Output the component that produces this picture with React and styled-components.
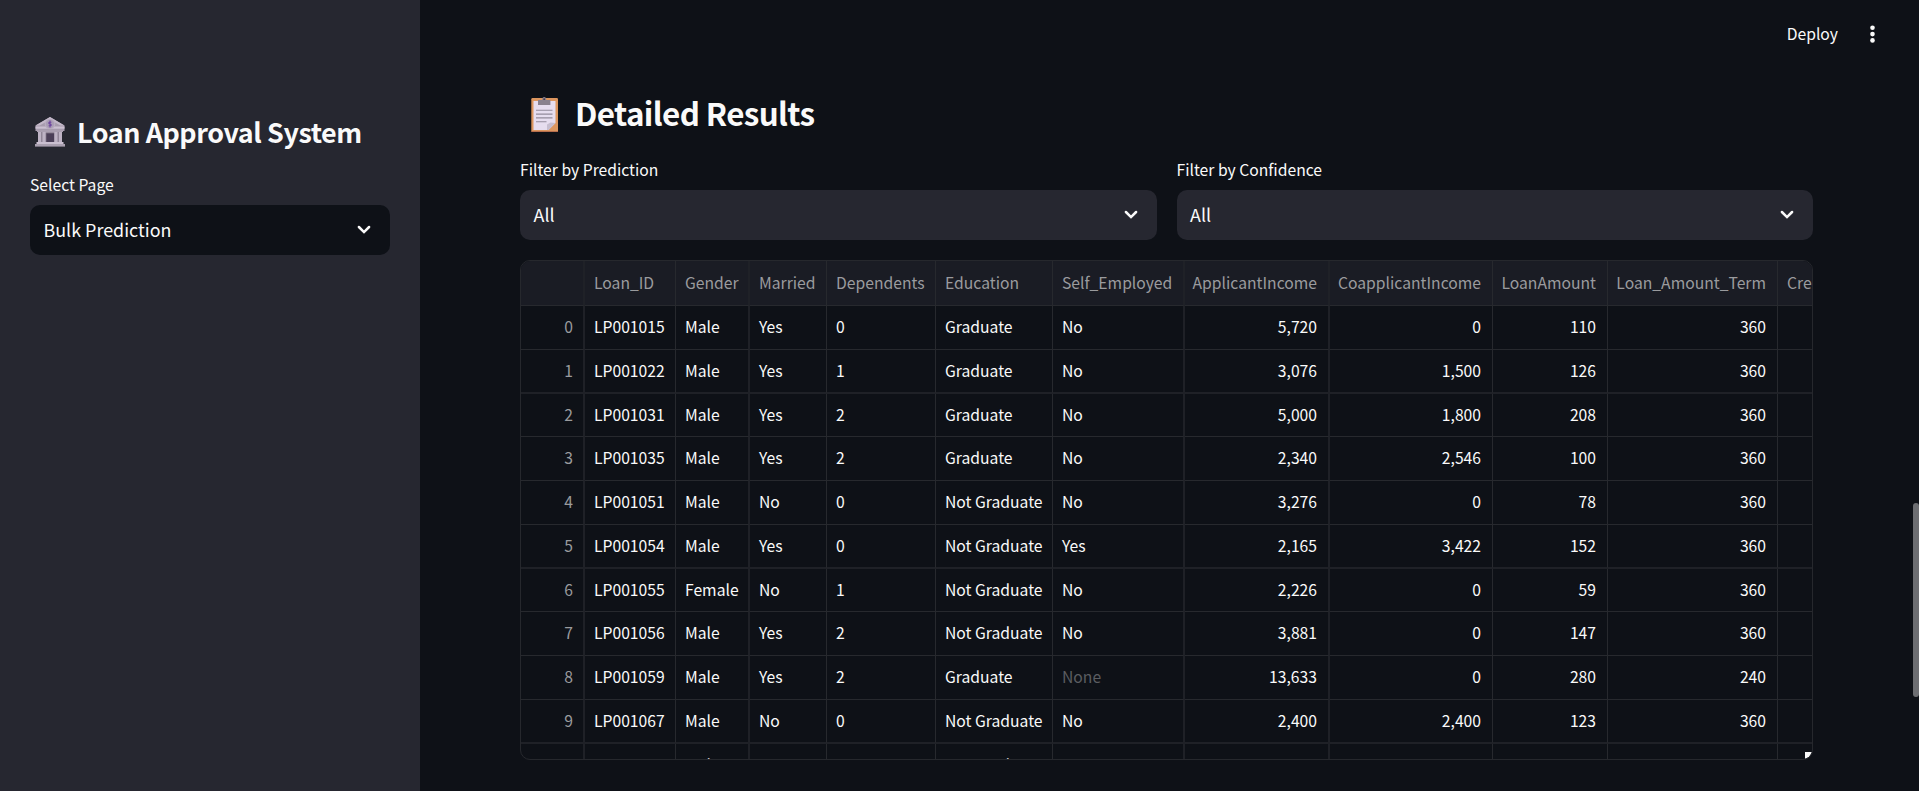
import React from "react";
import styled, { createGlobalStyle } from "styled-components";

const GlobalStyle = createGlobalStyle`
  * { box-sizing: border-box; }
  body {
    margin: 0;
    background: #0e1117;
    color: #fafafa;
    font-family: "Noto Sans CJK SC", "Noto Sans", sans-serif;
    font-size: 17.9px;
    overflow: hidden;
  }
`;

const Page = styled.div`
  display: flex;
  width: 100%;
  height: 791px;
  overflow: hidden;
  position: relative;
`;

const Sidebar = styled.aside`
  width: 420px;
  flex: none;
  background: #262730;
  padding: 112px 30px 0;
`;

const Main = styled.main`
  flex: 1;
  min-width: 0;
  display: flex;
  flex-direction: column;
`;

const Toolbar = styled.header`
  height: 68px;
  flex: none;
  display: flex;
  align-items: center;
  justify-content: flex-end;
  gap: 31px;
  padding-right: 43px;
`;

const Deploy = styled.span`
  font-size: 15.7px;
  line-height: 28px;
`;

const Content = styled.div`
  padding: 22px 106px 0 100px;
`;

const SidebarTitle = styled.h1`
  display: flex;
  align-items: center;
  gap: 11px;
  margin: 0;
  padding: 0 0 2px 4px;
  height: 42px;
  font-size: 26.9px;
  line-height: 40px;
  font-weight: 600;
  letter-spacing: -0.43px;
  white-space: nowrap;
`;

const PageTitle = styled.h2`
  display: flex;
  align-items: center;
  gap: 16px;
  margin: 0;
  padding: 0 0 2px 11px;
  height: 48px;
  font-size: 31.4px;
  line-height: 46px;
  font-weight: 600;
  letter-spacing: -0.62px;
  white-space: nowrap;
`;

const Field = styled.div`
  flex: 1;
  min-width: 0;
  padding-top: ${(p) => p.$top}px;
`;

const FieldLabel = styled.div`
  font-size: 15.7px;
  line-height: 26px;
  margin-bottom: 7px;
`;

const SelectBox = styled.div`
  display: flex;
  align-items: center;
  justify-content: space-between;
  height: 50px;
  padding: 0 19px 0 13.5px;
  border-radius: 10px;
  background: ${(p) => (p.$dark ? "#0e1117" : "#262730")};
`;

const SelectValue = styled.span`
  line-height: 30px;
  padding-bottom: 2px;
`;

const Filters = styled.div`
  display: flex;
  gap: 20px;
`;

const Frame = styled.div`
  position: relative;
  height: 500px;
  margin-top: 20px;
  border: 1px solid #26282d;
  border-radius: 10px;
  overflow: hidden;
`;

const Row = styled.div`
  display: grid;
  grid-template-columns: 64px 91px 74px 77px 109px 117px 132px 145px 163px 115px 170px 120px;
  width: max-content;
  height: ${(p) => p.$height}px;
  background: ${(p) => (p.$head ? "#1a1c24" : "transparent")};
`;

const Cell = styled.div`
  padding: ${(p) => (p.$index ? "0 10px 0 0" : p.$right ? "0 11px 0 0" : "0 0 0 9px")};
  border-right: ${(p) => (p.$soft ? "2px solid #1f2127" : "1px solid #27292e")};
  border-bottom: ${(p) => (p.$softRow ? "2px solid #1f2127" : "1px solid #27292e")};
  font-size: 15.7px;
  line-height: ${(p) => (p.$head ? 43 : 41)}px;
  text-align: ${(p) => (p.$right ? "right" : "left")};
  color: ${(p) => (p.$tone === "muted" ? "#9a9b9e" : p.$tone === "faint" ? "#5b5d61" : "#fafafa")};
  white-space: nowrap;
  overflow: hidden;
`;

const ResizeHandle = styled.svg`
  position: absolute;
  right: 0;
  bottom: 0;
`;

const ScrollThumb = styled.div`
  position: absolute;
  right: 0;
  top: 503px;
  width: 6px;
  height: 194px;
  border-radius: 4px;
  background: #6d6e72;
`;

const ClipboardSvg = styled.svg`
  margin-top: 2px;
`;

const Chevron = () => (
  <svg width="14" height="10" viewBox="0 0 14 10" fill="none">
    <path d="M1.9 2 L7 7.1 L12.1 2" stroke="#fafafa" strokeWidth="2.5" strokeLinecap="round" />
  </svg>
);

const BankIcon = () => (
  <svg width="32" height="30" viewBox="0 0 32 30">
    <path d="M16 0 L30.5 8.5 V14 H1.5 V8.5 Z" fill="#a69bad" />
    <path d="M16 0 L30.5 8.5 H26.5 L16 2.8 L5.5 8.5 H1.5 Z" fill="#c4b9ca" />
    <rect x="1.5" y="9.5" width="29" height="2.2" fill="#cbc0d1" />
    <rect x="4" y="14" width="24" height="12" fill="#74697b" />
    <rect x="11" y="14" width="10" height="2" fill="#978c9d" />
    <rect x="12.5" y="16.5" width="7.5" height="9.5" fill="#4b3f58" />
    <path d="M4 14 h3.4 v12 h-3.4 z M8.3 14 h3.4 v12 h-3.4 z M20.3 14 h3.4 v12 h-3.4 z M24.6 14 h3.4 v12 h-3.4 z" fill="#beb3c5" />
    <path d="M3 13 h26 v2 h-26 z" fill="#aa9fb1" />
    <rect x="2.5" y="25" width="27" height="2" fill="#cabfd0" />
    <rect x="1" y="27" width="30" height="2.6" fill="#aaa0b0" />
    <circle cx="16" cy="7" r="5.3" fill="#b9adc0" />
    <circle cx="16" cy="7" r="4.2" fill="#a99db4" />
    <path d="M16 3.5 V10.5 M17.4 5.2 H15.3 Q14.3 6 15.3 6.8 L16.7 7.2 Q17.7 8 16.7 8.8 H14.6" stroke="#7048a0" strokeWidth="1.1" fill="none" />
  </svg>
);

const ClipboardIcon = () => (
  <ClipboardSvg width="28" height="35" viewBox="0 0 28 35">
    <rect x="0.3" y="1" width="26.7" height="34" rx="1.2" fill="#dc965f" />
    <path d="M0.3 34 h26.7 v0.5 q0 0.5 -1 0.5 h-24.7 q-1 0 -1 -0.5 z" fill="#b66e4c" />
    <path d="M2.5 4 H24.5 V26 L17.5 33 H2.5 Z" fill="#e6ddef" />
    <path d="M24.5 26 L17.5 33 H16 V27.5 L19.5 25.5 Z" fill="#c6bdcf" />
    <path d="M7 3 h4.2 q0 -3 2 -3 t2 3 h4.2 v5 h-12.4 z" fill="#89818e" />
    <circle cx="13.2" cy="2.2" r="0.9" fill="#473d4c" />
    <path d="M5 13.2 H21.5 M5 17.1 H21.5 M5 20.9 H21.5 M5 24.7 H15.5" stroke="#938b9c" strokeWidth="1.1" />
  </ClipboardSvg>
);

const MenuDots = () => (
  <svg width="7" height="20" viewBox="0 0 7 20" fill="#fafafa">
    <circle cx="3.5" cy="3.8" r="2.3" />
    <circle cx="3.5" cy="10.1" r="2.3" />
    <circle cx="3.5" cy="16.4" r="2.3" />
  </svg>
);

const COLUMNS = [
  "", "Loan_ID", "Gender", "Married", "Dependents", "Education", "Self_Employed",
  "ApplicantIncome", "CoapplicantIncome", "LoanAmount", "Loan_Amount_Term", "Credit_History",
];

const ROWS = [
  ["0", "LP001015", "Male", "Yes", "0", "Graduate", "No", "5,720", "0", "110", "360", ""],
  ["1", "LP001022", "Male", "Yes", "1", "Graduate", "No", "3,076", "1,500", "126", "360", ""],
  ["2", "LP001031", "Male", "Yes", "2", "Graduate", "No", "5,000", "1,800", "208", "360", ""],
  ["3", "LP001035", "Male", "Yes", "2", "Graduate", "No", "2,340", "2,546", "100", "360", ""],
  ["4", "LP001051", "Male", "No", "0", "Not Graduate", "No", "3,276", "0", "78", "360", ""],
  ["5", "LP001054", "Male", "Yes", "0", "Not Graduate", "Yes", "2,165", "3,422", "152", "360", ""],
  ["6", "LP001055", "Female", "No", "1", "Not Graduate", "No", "2,226", "0", "59", "360", ""],
  ["7", "LP001056", "Male", "Yes", "2", "Not Graduate", "No", "3,881", "0", "147", "360", ""],
  ["8", "LP001059", "Male", "Yes", "2", "Graduate", "None", "13,633", "0", "280", "240", ""],
  ["9", "LP001067", "Male", "No", "0", "Not Graduate", "No", "2,400", "2,400", "123", "360", ""],
  ["10", "LP001078", "Male", "No", "0", "Not Graduate", "No", "3,091", "0", "90", "360", ""],
];

const SOFT_COLUMNS = [0, 2, 6, 7];
const isNumeric = (c) => c === 0 || (c >= 7 && c <= 10);

// Every fourth row is one pixel shorter, for an average row height of 43.75px.
const rowHeight = (index) => (index % 4 === 2 ? 43 : 44);

const DataRow = ({ values, head, index }) => (
  <Row $head={head} $height={head ? 45 : rowHeight(index)}>
    {values.map((value, c) => (
      <Cell
        key={c}
        $head={head}
        $index={c === 0}
        $right={isNumeric(c)}
        $soft={SOFT_COLUMNS.includes(c)}
        $softRow={!head && index % 4 === 1}
        $tone={head || c === 0 ? "muted" : value === "None" ? "faint" : "normal"}
      >
        {value}
      </Cell>
    ))}
  </Row>
);

const Select = ({ label, value, top, dark }) => (
  <Field $top={top}>
    <FieldLabel>{label}</FieldLabel>
    <SelectBox $dark={dark}>
      <SelectValue>{value}</SelectValue>
      <Chevron />
    </SelectBox>
  </Field>
);

export default function App() {
  return (
    <Page>
      <GlobalStyle />
      <Sidebar>
        <SidebarTitle>
          <BankIcon />
          Loan Approval System
        </SidebarTitle>
        <Select label="Select Page" value="Bulk Prediction" top={18} dark />
      </Sidebar>
      <Main>
        <Toolbar>
          <Deploy>Deploy</Deploy>
          <MenuDots />
        </Toolbar>
        <Content>
          <PageTitle>
            <ClipboardIcon />
            Detailed Results
          </PageTitle>
          <Filters>
            <Select label="Filter by Prediction" value="All" top={19} />
            <Select label="Filter by Confidence" value="All" top={19} />
          </Filters>
          <Frame>
            <DataRow values={COLUMNS} head />
            {ROWS.map((row, i) => (
              <DataRow key={row[0]} values={row} index={i} />
            ))}
            <ResizeHandle width="7" height="7" viewBox="0 0 7 7">
              <path d="M0 0 H7 Q5.5 5.5 0 7 Z" fill="#fafafa" />
            </ResizeHandle>
          </Frame>
        </Content>
      </Main>
      <ScrollThumb />
    </Page>
  );
}
